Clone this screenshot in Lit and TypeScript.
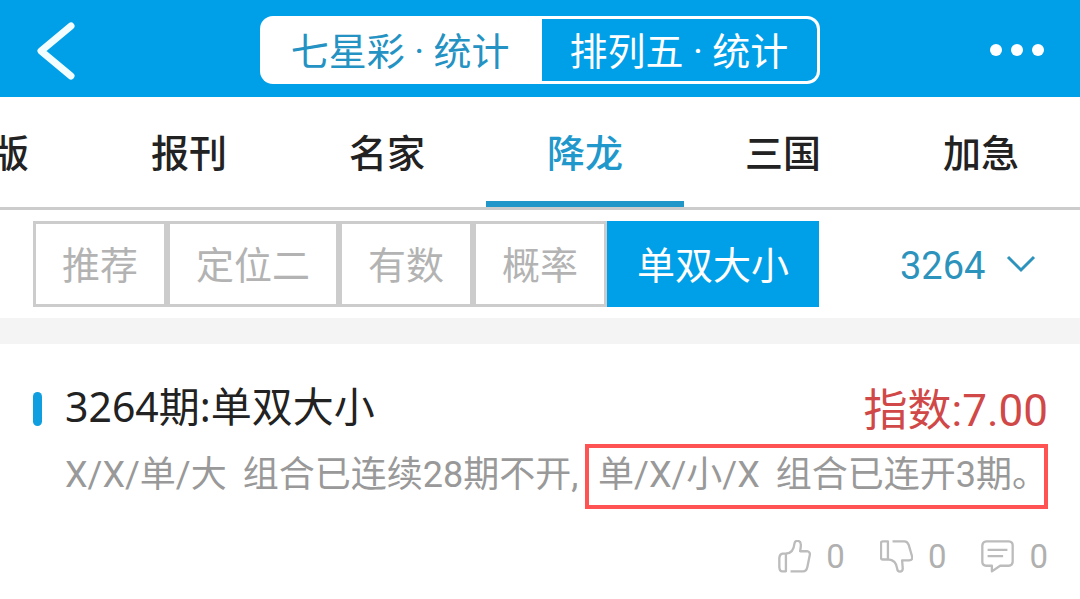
import { LitElement, html, css, svg } from "lit";
import { customElement, state } from "lit/decorators.js";
import { classMap } from "lit/directives/class-map.js";

const thumbUp = svg`
  <path d="M24 41 H14 Q5 42 4 54 V82 Q5 95 13 95 H24 Z"></path>
  <path d="M24 41 C38 41 48 30 50 10 C51 0 68 0 69 12 C70 20 68 26 67 34 H88 C95 35 98 40 96 47 L89 82 C87 91 83 95 76 95 H38"></path>`;

const thumbDown = svg`
  <path d="M24 4 H8 Q3 4 3 9 V54 Q3 59 8 59 H24 Z"></path>
  <path d="M24 59 C40 60 50 69 52 87 C53 99 68 99 69 87 L67 62 H88 C97 61 99 56 97 49 L87 15 C84 7 80 4 74 4 H38"></path>`;

const comment = svg`
  <path d="M16 4 H84 Q96 5 96 16 V66 Q95 77 84 78 H58 L33 95 V78 H16 Q4 77 4 66 V16 Q5 5 16 4 Z"></path>
  <path d="M20 30 H80 M20 49 H67"></path>`;

@customElement("app-root")
export class AppRoot extends LitElement {
  @state() private lottery = 0;
  @state() private tab = 3;
  @state() private filter = 4;

  private lotteries = ["七星彩 · 统计", "排列五 · 统计"];
  private tabs = ["老版", "报刊", "名家", "降龙", "三国", "加急"];
  private filters = ["推荐", "定位二", "有数", "概率", "单双大小"];
  private actions = [
    { label: "赞", icon: thumbUp },
    { label: "踩", icon: thumbDown },
    { label: "评论", icon: comment },
  ];

  static styles = css`
    :host {
      display: block;
      min-height: 100vh;
      background: #fff;
      color: #222;
      font-family: Roboto, "Noto Sans CJK SC", sans-serif;
      font-size: 38px;
    }
    * { box-sizing: border-box; }
    button, select {
      margin: 0;
      padding: 0;
      border: 0;
      background: none;
      color: inherit;
      font: inherit;
      white-space: nowrap;
      cursor: pointer;
    }
    svg { display: block; fill: none; }
    .header {
      display: grid;
      grid-template-columns: 1fr auto 1fr;
      align-items: center;
      padding: 16px 34px 13px;
      background: #00a0e9;
      color: #fff;
    }
    .back { justify-self: start; }
    .more { justify-self: end; }
    .segment {
      display: flex;
      height: 68px;
      padding: 3px;
      border-radius: 13px;
      background: #fff;
    }
    .segment button {
      padding: 0 29px 4px 28px;
      border-radius: 10px 0 0 10px;
      background: #00a0e9;
    }
    .segment button:last-child { border-radius: 0 10px 10px 0; }
    .segment button.on { padding-right: 32px; background: #fff; color: #2492c2; }
    .tabs {
      display: flex;
      justify-content: flex-end;
      height: 113px;
      border-bottom: 3px solid #ccc;
      overflow: hidden;
      font-weight: 500;
    }
    .tabs button {
      flex: none;
      width: 198px;
      padding-top: 3px;
      border-bottom: 6px solid transparent;
    }
    .tabs .on { color: #2098cc; border-color: #2196c8; }
    .filters {
      display: flex;
      justify-content: space-between;
      align-items: center;
      padding: 11px 44px 11px 33px;
    }
    .group { display: flex; }
    .group button {
      height: 86px;
      padding: 0 26px 4px;
      border: 3px solid #ccc;
      color: #b3b3b3;
    }
    .group .on {
      padding: 0 30px 4px;
      border: 0;
      background: #00a0e9;
      color: #fff;
    }
    .issue {
      display: grid;
      grid-template-columns: auto 30px;
      align-items: center;
      gap: 20px;
      color: #2c93bd;
    }
    .issue select { appearance: none; padding-top: 4px; }
    .band { height: 26px; background: #f4f4f4; }
    .card { padding: 31px 32px 0 33px; }
    .head { display: flex; align-items: center; height: 68px; }
    .bar { width: 9px; height: 34px; border-radius: 5px; background: #0f9fe0; }
    h1 {
      flex: 1;
      margin: 0;
      padding: 0 0 6px 23px;
      font-family: "Noto Sans", "Noto Sans CJK SC", sans-serif;
      font-size: 41px;
      font-weight: 400;
      line-height: 60px;
    }
    .score { padding-bottom: 4px; color: #d04848; font-size: 44px; }
    .text {
      display: flex;
      gap: 16px;
      margin: 0;
      padding-left: 32px;
      height: 64px;
      line-height: 64px;
      color: #999;
      font-size: 36px;
      white-space: nowrap;
    }
    .marked { position: relative; display: flex; gap: 16px; margin-left: auto; }
    .marked::after {
      content: "";
      position: absolute;
      inset: 1px 0 -2px -13px;
      border: 4px solid #ff5252;
    }
    .actions {
      display: flex;
      justify-content: flex-end;
      gap: 35px;
      padding-top: 29px;
      color: #b0b0b0;
      font-size: 33px;
    }
    .actions button { display: flex; align-items: center; gap: 15px; height: 40px; }
  `;

  render() {
    return html`
      <header class="header">
        <button class="back" aria-label="返回">
          <svg width="42" height="62" viewBox="0 0 42 62" stroke="#f2fdff" stroke-width="7" stroke-linejoin="round" stroke-linecap="round">
            <path d="M37 7 L7 32 L37 57"></path>
          </svg>
        </button>
        <div class="segment">
          ${this.lotteries.map((name, i) => html`
            <button class=${classMap({ on: i === this.lottery })} @click=${() => (this.lottery = i)}>${name}</button>`)}
        </div>
        <button class="more" aria-label="更多">
          <svg width="58" height="16" viewBox="0 0 58 16">
            <g fill="#fff">
              <circle cx="8" cy="8" r="6"></circle>
              <circle cx="29" cy="8" r="6"></circle>
              <circle cx="50" cy="8" r="6"></circle>
            </g>
          </svg>
        </button>
      </header>
      <nav class="tabs">
        ${this.tabs.map((name, i) => html`
          <button class=${classMap({ on: i === this.tab })} @click=${() => (this.tab = i)}>${name}</button>`)}
      </nav>
      <section class="filters">
        <div class="group">
          ${this.filters.map((name, i) => html`
            <button class=${classMap({ on: i === this.filter })} @click=${() => (this.filter = i)}>${name}</button>`)}
        </div>
        <label class="issue">
          <select aria-label="期号"><option>3264</option></select>
          <svg width="30" height="18" viewBox="0 0 30 18" stroke="#2c93bd" stroke-width="3">
            <path d="M2 2 L15 15 L28 2"></path>
          </svg>
        </label>
      </section>
      <div class="band"></div>
      <article class="card">
        <div class="head">
          <span class="bar"></span>
          <h1>3264期:单双大小</h1>
          <span class="score">指数:7.00</span>
        </div>
        <p class="text">
          <span>X/X/单/大</span>
          <span>组合已连续28期不开,</span>
          <span class="marked">
            <span>单/X/小/X</span>
            <span>组合已连开3期。</span>
          </span>
        </p>
        <div class="actions">
          ${this.actions.map((a) => html`
            <button aria-label=${a.label}>
              <svg width="33" height="33" viewBox="0 0 100 100" stroke="#bcbcbc" stroke-width="7" stroke-linejoin="round">${a.icon}</svg>
              <span>0</span>
            </button>`)}
        </div>
      </article>
    `;
  }
}
